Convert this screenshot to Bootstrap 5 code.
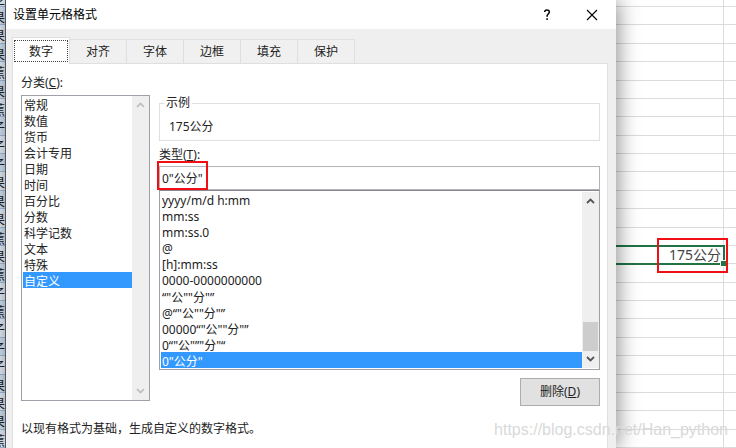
<!DOCTYPE html>
<html lang="zh-CN">
<head>
<meta charset="utf-8">
<meta name="viewport" content="width=device-width, initial-scale=1">
<title>设置单元格格式</title>
<link href="https://cdn.jsdelivr.net/npm/bootstrap@5.3.0/dist/css/bootstrap.min.css" rel="stylesheet">
<style>
body{font-family:"Noto Sans","Noto Sans CJK SC",sans-serif;font-size:12px;line-height:18px;color:#222;background:#fff}
.workspace{height:100vh;min-height:448px}
.names-col{width:5px;background:#d3e3f5;color:#222;font-size:13px}
.names-col div{flex:1 1 0;min-height:0;border-bottom:1px solid #9fbfdf;line-height:20px;white-space:nowrap;overflow:hidden}
.names-col div:first-child,.sheet-row:first-child{flex:0 0 7px}
.names-col div:first-child{line-height:8px}
.names-col div:nth-child(odd){background:#e6effa}
.dialog{background:#efefef;border-left:1px solid #555;box-shadow:2px 0 20px rgba(0,0,0,.45);z-index:2;min-width:0}
.title-bar{height:29px;padding-left:7px;padding-right:18px;color:#000}
.title-bar h1{font-size:12px;line-height:18px}
.title-bar button{line-height:0;color:#000}
.title-tools{gap:34px}
.dialog-body{padding:8px 8px 0 6px}
.format-tabs{border:0;height:26px}
.format-tabs .nav-link{width:57px;height:24px;padding:0;border:1px solid #dfdfdf;border-left:0;border-bottom:0;border-radius:0;color:#222;background:#f0f0f0;margin:0;line-height:24px}
.format-tabs .nav-link.active{width:58px;height:27px;margin-bottom:-1px;background:#fff;border:1px solid #dfdfdf;border-bottom:0;padding:1px;color:#222;position:relative}
.format-tabs .nav-link.active span{display:block;border:1px dotted #444;height:22px;line-height:22px}
.panel{border:1px solid #dfdfdf;border-bottom:0;background:#fff;padding:10px 7px 8px 8px}
.category-col{width:129px}
.format-col{padding-top:20px;margin-left:9px;min-width:0}
.listbox{border:1px solid #a0a0aa;background:#fff}
.category-box{height:306px;margin-top:3px}
.listbox select{border:0;outline:0;padding:0 0 0 1px;background:#fff;color:#222;min-width:0;overflow:hidden;scrollbar-width:none;border-radius:0}
.listbox select::-webkit-scrollbar{display:none}
.listbox option{height:16px;min-height:16px;line-height:16px;padding:0 0 0 1px;font-size:12px}
.listbox option:checked{background:linear-gradient(#39f,#39f);-webkit-text-fill-color:#fff}
.scroll-rail{width:17px;background:#efefef;padding:6px 0}
.scroll-rail svg{display:block;margin:0 auto}
.thumb{height:29px;width:15px;background:#cdcdcd;margin-bottom:5px}
.sample{border:1px solid #dfdfdf;padding:6px 9px 4px;margin:0}
.sample legend{float:none;width:auto;font-size:12px;line-height:18px;padding:0 2px;margin:0 0 0 -5px}
.type-label{margin-top:5px}
.type-input{height:24px;border:1px solid #b4b4b8;border-radius:0;padding:0 2px;font-size:12px;color:#222}
.type-wrap{margin-top:2px}
.format-list{padding:1px 0;border-top-color:#888893}
.format-list select{height:176px}
.marker{position:absolute;border:2px solid #f00f14;pointer-events:none;z-index:3}
.type-marker{left:-2px;top:-5px;width:51px;height:29px}
.cell-marker{right:-5px;top:-9px;width:71px;height:35px}
.delete-btn{width:80px;height:28px;margin-top:8px;padding:0;border:1px solid #adadad;border-radius:0;background:#e1e1e1;color:#222;font-size:12px}
.hint{margin-top:14px}
.sheet{width:120px}
.sheet-row{flex:1 1 0;min-height:0;border-bottom:1px solid #dcdcdc}
.sheet-row::before{content:"";flex:0 0 108px;border-right:1px solid #dcdcdc}
.sheet-row.chosen::before{display:none}
.chosen-cell{width:109px;margin:-1px 0 -2px;border:2px solid #217346;border-left:0;font-size:14px;line-height:20px;padding-right:2px;position:relative;color:#444}
.chosen-cell::after{content:"";position:absolute;right:-3px;bottom:-3px;width:5px;height:5px;background:#217346;border:0;outline:1px solid #fff}
.watermark{position:absolute;right:8px;bottom:7px;font:16px/22px "Liberation Sans",Arial,sans-serif;color:#d9d9d9;z-index:4}
</style>
<script defer src="https://cdn.jsdelivr.net/npm/bootstrap@5.3.0/dist/js/bootstrap.bundle.min.js"></script>
</head>
<body>
<div class="workspace d-flex position-relative overflow-hidden">
  <div class="names-col d-flex flex-column overflow-hidden flex-shrink-0" aria-hidden="true">
    <div class="d-flex justify-content-end">子</div><div class="d-flex justify-content-end">果</div><div class="d-flex justify-content-end">果</div><div class="d-flex justify-content-end">果</div><div class="d-flex justify-content-end">蕉</div><div class="d-flex justify-content-end">果</div><div class="d-flex justify-content-end">蕉</div><div class="d-flex justify-content-end">子</div><div class="d-flex justify-content-end">子</div><div class="d-flex justify-content-end">子</div><div class="d-flex justify-content-end">果</div><div class="d-flex justify-content-end">果</div><div class="d-flex justify-content-end">果</div><div class="d-flex justify-content-end">蕉</div><div class="d-flex justify-content-end">果</div><div class="d-flex justify-content-end">蕉</div><div class="d-flex justify-content-end">子</div><div class="d-flex justify-content-end">蕉</div><div class="d-flex justify-content-end">子</div><div class="d-flex justify-content-end">子</div><div class="d-flex justify-content-end">子</div><div class="d-flex justify-content-end">果</div><div class="d-flex justify-content-end">果</div><div class="d-flex justify-content-end">果</div><div class="d-flex justify-content-end">蕉</div>
  </div>

  <main class="dialog d-flex flex-column flex-grow-1 position-relative">
    <header class="title-bar d-flex align-items-center justify-content-between flex-shrink-0 bg-white">
      <h1 class="m-0 fw-normal">设置单元格格式</h1>
      <div class="title-tools d-flex align-items-center">
        <button type="button" class="border-0 bg-transparent p-0" aria-label="帮助"><svg width="10" height="12" viewBox="0 0 10 12" fill="none" stroke="currentColor" stroke-width="1.5"><path d="M2.7 3V2.5C3 1.2 4 .9 5 .9c1.400 0 2.300.8 2.300 2.100 0 1.900-2.200 2.100-2.200 4v.8M5.100 9.200v1.800"/></svg></button>
        <button type="button" class="border-0 bg-transparent p-0" aria-label="关闭"><svg width="12" height="12" viewBox="0 0 12 12" stroke="currentColor" stroke-width="1.100"><path d="M1 1l10 10M11 1L1 11"/></svg></button>
      </div>
    </header>

    <div class="dialog-body d-flex flex-column flex-grow-1">
      <div class="format-tabs nav nav-tabs align-items-end" role="tablist">
        <button type="button" class="nav-link active" role="tab" aria-selected="true"><span>数字</span></button>
        <button type="button" class="nav-link" role="tab">对齐</button>
        <button type="button" class="nav-link" role="tab">字体</button>
        <button type="button" class="nav-link" role="tab">边框</button>
        <button type="button" class="nav-link" role="tab">填充</button>
        <button type="button" class="nav-link" role="tab">保护</button>
      </div>

      <section class="panel flex-grow-1">
        <div class="d-flex">
          <div class="category-col flex-shrink-0">
            <label for="category" class="d-block">分类(<u>C</u>):</label>
            <div class="listbox category-box d-flex">
              <select id="category" size="19" class="flex-grow-1 h-100">
                <option>常规</option><option>数值</option><option>货币</option><option>会计专用</option><option>日期</option><option>时间</option><option>百分比</option><option>分数</option><option>科学记数</option><option>文本</option><option>特殊</option><option selected>自定义</option>
              </select>
              <div class="scroll-rail d-flex flex-column justify-content-between" aria-hidden="true">
                <svg width="9" height="6" viewBox="0 0 9 6" fill="none" stroke="#bcbcbc" stroke-width="1.600"><path d="M1 5l3.500-3.500L8 5"/></svg>
                <svg width="9" height="6" viewBox="0 0 9 6" fill="none" stroke="#bcbcbc" stroke-width="1.600"><path d="M1 1l3.500 3.500L8 1"/></svg>
              </div>
            </div>
          </div>

          <div class="format-col flex-grow-1 d-flex flex-column">
            <fieldset class="sample">
              <legend>示例</legend>
              <div>175公分</div>
            </fieldset>
            <label for="type" class="type-label">类型(<u>T</u>):</label>
            <div class="type-wrap position-relative">
              <input id="type" type="text" class="type-input d-block w-100" value="0&quot;公分&quot;">
              <div class="marker type-marker"></div>
            </div>
            <div class="listbox format-list d-flex">
              <select size="11" class="flex-grow-1" aria-label="格式代码">
                <option>yyyy/m/d h:mm</option><option>mm:ss</option><option>mm:ss.0</option><option>@</option><option>[h]:mm:ss</option><option>0000-0000000000</option><option>“"公""分"”</option><option>@“"公""分"”</option><option>00000“"公""分"”</option><option>0“"公"”"分"“</option><option selected>0"公分"</option>
              </select>
              <div class="scroll-rail d-flex flex-column" aria-hidden="true">
                <svg class="mb-auto" width="9" height="6" viewBox="0 0 9 6" fill="none" stroke="#555" stroke-width="1.800"><path d="M1 5l3.500-3.500L8 5"/></svg>
                <div class="thumb mx-auto"></div>
                <svg width="9" height="6" viewBox="0 0 9 6" fill="none" stroke="#555" stroke-width="1.800"><path d="M1 1l3.500 3.500L8 1"/></svg>
              </div>
            </div>
            <button type="button" class="delete-btn btn align-self-end">删除(<u>D</u>)</button>
          </div>
        </div>
        <p class="hint mb-0">以现有格式为基础，生成自定义的数字格式。</p>
      </section>
    </div>
  </main>

  <aside class="sheet d-flex flex-column flex-shrink-0">
    <div class="sheet-row d-flex"></div><div class="sheet-row d-flex"></div><div class="sheet-row d-flex"></div><div class="sheet-row d-flex"></div><div class="sheet-row d-flex"></div><div class="sheet-row d-flex"></div><div class="sheet-row d-flex"></div><div class="sheet-row d-flex"></div><div class="sheet-row d-flex"></div><div class="sheet-row d-flex"></div><div class="sheet-row d-flex"></div><div class="sheet-row d-flex"></div><div class="sheet-row d-flex"></div><div class="sheet-row d-flex"></div>
    <div class="sheet-row chosen d-flex"><div class="chosen-cell text-end d-flex align-items-center justify-content-end">175公分<span class="marker cell-marker"></span></div></div>
    <div class="sheet-row d-flex"></div><div class="sheet-row d-flex"></div><div class="sheet-row d-flex"></div><div class="sheet-row d-flex"></div><div class="sheet-row d-flex"></div><div class="sheet-row d-flex"></div><div class="sheet-row d-flex"></div><div class="sheet-row d-flex"></div><div class="sheet-row d-flex"></div><div class="sheet-row d-flex"></div>
  </aside>
  <div class="watermark">https://blog.csdn.net/Han_python</div>
</div>
</body>
</html>
